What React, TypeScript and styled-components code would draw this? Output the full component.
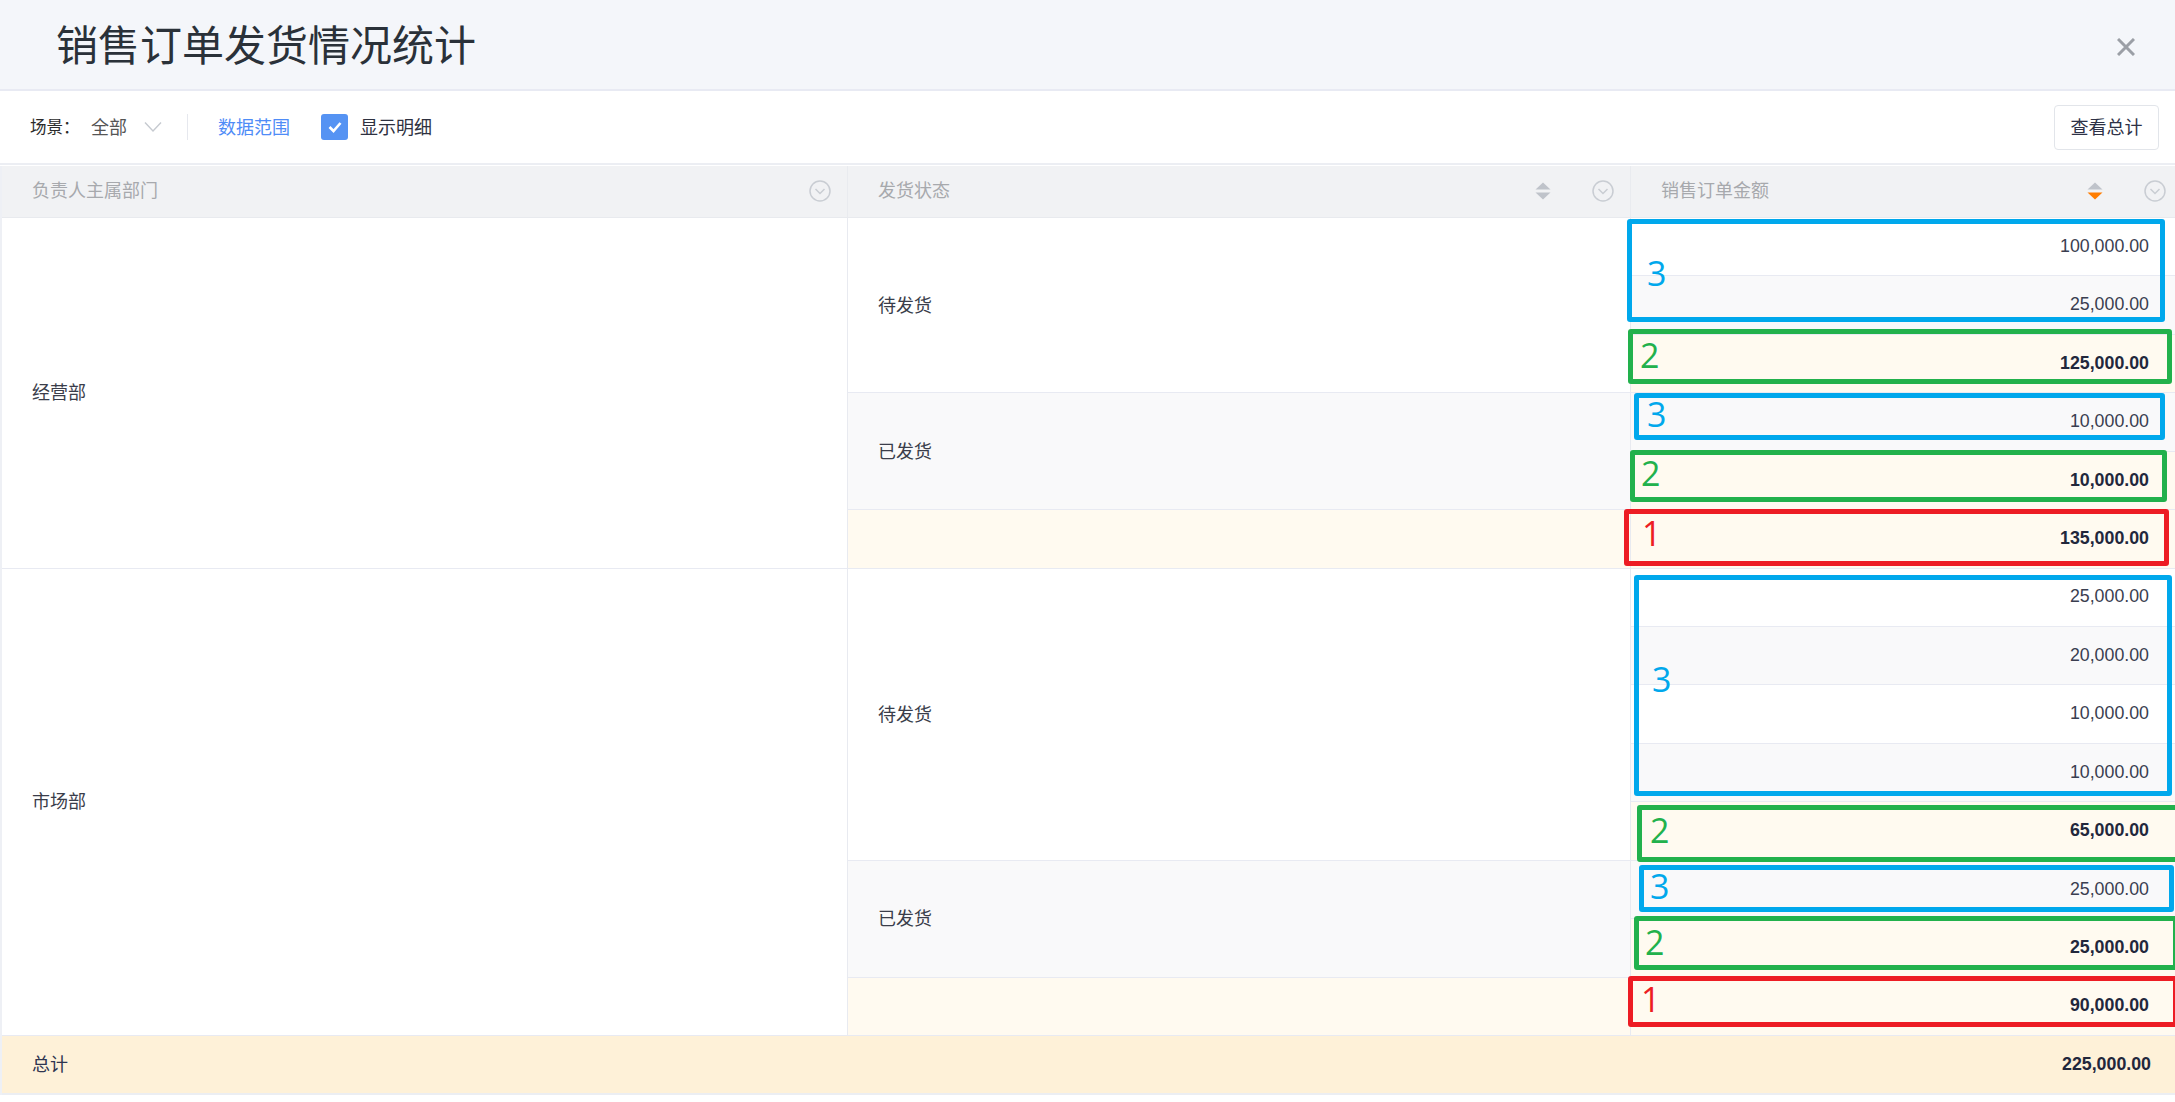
import React from "react";
import styled, { createGlobalStyle } from "styled-components";

const Global = createGlobalStyle`
  html, body { margin: 0; padding: 0; background: #fff; overflow: hidden; }
  * { box-sizing: border-box; }
  body { font-family: "Liberation Sans", "Noto Sans CJK SC", sans-serif; }
`;

const Page = styled.div`
  position: relative;
  width: 2175px;
  height: 1102px;
  overflow: hidden;
  display: flex;
  flex-direction: column;
  font-size: 18px;
  color: #333849;
`;

const TitleBar = styled.header`
  height: 91px;
  flex: none;
  background: #f4f6fa;
  border-bottom: 2px solid #e8eaf3;
  display: flex;
  align-items: center;
  justify-content: space-between;
  padding: 0 40px 3px 56px;
`;

const Title = styled.h1`
  margin: 0;
  font: 400 42px/1 "Noto Sans CJK SC", sans-serif;
  color: #2a3139;
`;

const CloseButton = styled.button`
  border: 0;
  background: none;
  padding: 0;
  width: 18px;
  height: 18px;
  display: block;
  margin-top: 8px;
  svg { display: block; }
`;

const Toolbar = styled.div`
  height: 74px;
  flex: none;
  display: flex;
  align-items: center;
  padding: 0 16px 0 30px;
  border-bottom: 2px solid #eceef3;
`;

const SceneLabel = styled.span`
  font: 400 16.5px/1 "Noto Sans CJK SC", sans-serif;
  color: #2b2b2b;
  width: 61px;
  padding-bottom: 2px;
`;

const SceneValue = styled.span`
  font: 400 18px/1 "Noto Sans CJK SC", sans-serif;
  color: #555;
  width: 53px;
  padding-bottom: 2px;
`;

const Chevron = styled.svg`
  display: block;
  width: 18px;
  height: 10px;
`;

const Divider = styled.span`
  width: 1px;
  height: 26px;
  margin: 0 30px 0 25px;
  background: #e6e8ee;
`;

const LinkText = styled.a`
  font: 400 18px/1 "Noto Sans CJK SC", sans-serif;
  color: #4f8cf7;
  padding-bottom: 2px;
`;

const CheckRow = styled.label`
  display: flex;
  align-items: center;
  gap: 12px;
  margin-left: 31px;
  font: 400 18px/1 "Noto Sans CJK SC", sans-serif;
  color: #2e3140;
`;

const CheckText = styled.span`
  padding-bottom: 2px;
`;

const CheckBox = styled.span`
  width: 27px;
  height: 26px;
  border-radius: 3px;
  background: #5593f3;
  display: flex;
  align-items: center;
  justify-content: center;
`;

const TotalButton = styled.button`
  margin-left: auto;
  width: 105px;
  height: 45px;
  background: #fff;
  border: 1px solid #e2e5ea;
  border-radius: 4px;
  font: 400 18px/1 "Noto Sans CJK SC", sans-serif;
  color: #2e3247;
  padding: 0 0 3px;
`;

const Table = styled.div`
  flex: none;
  margin-top: 1px;
  border-left: 2px solid #eef0f5;
`;

const Columns = styled.div`
  display: grid;
  grid-template-columns: 846px 783px 544px;
`;

const HeadRow = styled(Columns)`
  height: 52px;
  background: #f1f2f4;
  border-bottom: 1px solid #e8eaee;
`;

const HeadCell = styled.div<{ $last?: boolean }>`
  display: flex;
  align-items: center;
  padding: 0 0 2px 30px;
  font: 400 18px/1 "Noto Sans CJK SC", sans-serif;
  color: #a7a9ad;
  border-right: ${(p) => (p.$last ? "0" : "1px solid #e9ebef")};
`;

const HeadLabel = styled.span`
  margin-right: auto;
  padding-bottom: 3px;
`;

const SortIcon = styled.svg<{ $gap: number }>`
  display: block;
  width: 16px;
  height: 18px;
  margin-right: ${(p) => p.$gap}px;
`;

const FilterIcon = styled.svg<{ $right: number }>`
  display: block;
  width: 22px;
  height: 22px;
  margin-right: ${(p) => p.$right}px;
`;

const Body = styled(Columns)`
  height: 818px;
  grid-template-rows: repeat(14, 1fr);
`;

const Cell = styled.div<{ $tone: "white" | "gray" | "sub"; $col: number; $row: number; $span?: number }>`
  grid-column: ${(p) => p.$col};
  grid-row: ${(p) => p.$row} / span ${(p) => p.$span ?? 1};
  background: ${(p) =>
    p.$tone === "white" ? "#fff" : p.$tone === "gray" ? "#f9f9fa" : "#fffaf0"};
  border-bottom: 1px solid #e8eaf2;
  display: flex;
  align-items: center;
`;

const GroupCell = styled(Cell)`
  padding: 0 0 3px 30px;
  border-right: 1px solid #e8eaf0;
  font: 400 18px/1 "Noto Sans CJK SC", sans-serif;
  color: #3a3d4a;
`;

const AmountCell = styled(Cell)<{ $bold?: boolean }>`
  justify-content: flex-end;
  padding-right: 26px;
  font: ${(p) => (p.$bold ? 700 : 400)} 17.8px/1 "Liberation Sans", sans-serif;
  color: ${(p) => (p.$bold ? "#22273c" : "#3a3e50")};
`;

const TotalRow = styled.div`
  height: 59px;
  background: #fef1d8;
  border-bottom: 2px solid #eceef2;
  display: flex;
  align-items: center;
  justify-content: space-between;
  padding: 0 24px 0 30px;
`;

const TotalLabel = styled.span`
  font: 400 18px/1 "Noto Sans CJK SC", sans-serif;
  color: #2f3550;
  padding-bottom: 4px;
`;

const TotalValue = styled.span`
  font: 700 17.8px/1 "Liberation Sans", sans-serif;
  color: #22273c;
`;

const Mark = styled.div<{ $x: number; $y: number; $r: number; $b: number; $c: string }>`
  position: absolute;
  left: ${(p) => p.$x}px;
  top: ${(p) => p.$y}px;
  width: ${(p) => p.$r - p.$x}px;
  height: ${(p) => p.$b - p.$y}px;
  border: 5px solid ${(p) => p.$c};
  border-radius: 3px;
`;

const Digit = styled.span<{ $x: number; $y: number; $c: string }>`
  position: absolute;
  left: ${(p) => p.$x}px;
  top: ${(p) => p.$y}px;
  font: 400 34px/34px "Open Sans", sans-serif;
  color: ${(p) => p.$c};
`;

const BLUE = "#00a8ec";
const GREEN = "#22b14c";
const RED = "#ed1c24";

const marks = [
  { n: 3, c: BLUE, x: 1627, y: 219, r: 2165, b: 322, dx: 1647, dy: 256 },
  { n: 2, c: GREEN, x: 1628, y: 329, r: 2172, b: 384, dx: 1640, dy: 338 },
  { n: 3, c: BLUE, x: 1634, y: 393, r: 2165, b: 440, dx: 1647, dy: 397 },
  { n: 2, c: GREEN, x: 1630, y: 450, r: 2167, b: 502, dx: 1641, dy: 456 },
  { n: 1, c: RED, x: 1624, y: 509, r: 2169, b: 566, dx: 1642, dy: 516 },
  { n: 3, c: BLUE, x: 1634, y: 575, r: 2172, b: 796, dx: 1652, dy: 662 },
  { n: 2, c: GREEN, x: 1637, y: 805, r: 2180, b: 862, dx: 1650, dy: 813 },
  { n: 3, c: BLUE, x: 1639, y: 865, r: 2174, b: 912, dx: 1650, dy: 869 },
  { n: 2, c: GREEN, x: 1634, y: 916, r: 2178, b: 970, dx: 1645, dy: 925 },
  { n: 1, c: RED, x: 1628, y: 976, r: 2178, b: 1027, dx: 1641, dy: 982 },
];

const Sort = ({ active, gap }: { active?: boolean; gap: number }) => (
  <SortIcon $gap={gap} viewBox="0 0 16 18">
    <path d="M8 0.5 L15.5 7.5 H0.5 Z" fill="#bfc3ca" />
    <path d="M0.5 10.5 H15.5 L8 17.5 Z" fill={active ? "#ff7d00" : "#bfc3ca"} />
  </SortIcon>
);

const Filter = ({ right }: { right: number }) => (
  <FilterIcon $right={right} viewBox="0 0 22 22">
    <circle cx="11" cy="11" r="10" fill="none" stroke="#c9cdd3" strokeWidth="1.5" />
    <path d="M6.5 9 L11 13.5 L15.5 9" fill="none" stroke="#c9cdd3" strokeWidth="1.5" />
  </FilterIcon>
);

export default function App() {
  return (
    <Page>
      <Global />
      <TitleBar>
        <Title>销售订单发货情况统计</Title>
        <CloseButton aria-label="关闭">
          <svg width="18" height="18" viewBox="0 0 18 18">
            <path d="M1 1 L17 17 M17 1 L1 17" stroke="#9b9fa6" strokeWidth="3" fill="none" />
          </svg>
        </CloseButton>
      </TitleBar>
      <Toolbar>
        <SceneLabel>场景：</SceneLabel>
        <SceneValue>全部</SceneValue>
        <Chevron viewBox="0 0 18 10">
          <path d="M1 0.5 L9 9 L17 0.5" fill="none" stroke="#c6cad0" strokeWidth="1.4" />
        </Chevron>
        <Divider />
        <LinkText>数据范围</LinkText>
        <CheckRow>
          <CheckBox>
            <svg width="16" height="14" viewBox="0 0 16 14">
              <path d="M2.5 7 L6.5 11 L13.5 3" fill="none" stroke="#fff" strokeWidth="2.6" />
            </svg>
          </CheckBox>
          <CheckText>显示明细</CheckText>
        </CheckRow>
        <TotalButton>查看总计</TotalButton>
      </Toolbar>
      <Table>
        <HeadRow>
          <HeadCell>
            <HeadLabel>负责人主属部门</HeadLabel>
            <Filter right={16} />
          </HeadCell>
          <HeadCell>
            <HeadLabel>发货状态</HeadLabel>
            <Sort gap={41} />
            <Filter right={16} />
          </HeadCell>
          <HeadCell $last>
            <HeadLabel>销售订单金额</HeadLabel>
            <Sort active gap={41} />
            <Filter right={9} />
          </HeadCell>
        </HeadRow>
        <Body>
          <GroupCell $tone="white" $col={1} $row={1} $span={6}>经营部</GroupCell>
          <GroupCell $tone="white" $col={2} $row={1} $span={3}>待发货</GroupCell>
          <AmountCell $tone="white" $col={3} $row={1}>100,000.00</AmountCell>
          <AmountCell $tone="gray" $col={3} $row={2}>25,000.00</AmountCell>
          <AmountCell $tone="sub" $bold $col={3} $row={3}>125,000.00</AmountCell>
          <GroupCell $tone="gray" $col={2} $row={4} $span={2}>已发货</GroupCell>
          <AmountCell $tone="gray" $col={3} $row={4}>10,000.00</AmountCell>
          <AmountCell $tone="sub" $bold $col={3} $row={5}>10,000.00</AmountCell>
          <GroupCell $tone="sub" $col={2} $row={6} />
          <AmountCell $tone="sub" $bold $col={3} $row={6}>135,000.00</AmountCell>

          <GroupCell $tone="white" $col={1} $row={7} $span={8}>市场部</GroupCell>
          <GroupCell $tone="white" $col={2} $row={7} $span={5}>待发货</GroupCell>
          <AmountCell $tone="white" $col={3} $row={7}>25,000.00</AmountCell>
          <AmountCell $tone="gray" $col={3} $row={8}>20,000.00</AmountCell>
          <AmountCell $tone="white" $col={3} $row={9}>10,000.00</AmountCell>
          <AmountCell $tone="gray" $col={3} $row={10}>10,000.00</AmountCell>
          <AmountCell $tone="sub" $bold $col={3} $row={11}>65,000.00</AmountCell>
          <GroupCell $tone="gray" $col={2} $row={12} $span={2}>已发货</GroupCell>
          <AmountCell $tone="gray" $col={3} $row={12}>25,000.00</AmountCell>
          <AmountCell $tone="sub" $bold $col={3} $row={13}>25,000.00</AmountCell>
          <GroupCell $tone="sub" $col={2} $row={14} />
          <AmountCell $tone="sub" $bold $col={3} $row={14}>90,000.00</AmountCell>
        </Body>
        <TotalRow>
          <TotalLabel>总计</TotalLabel>
          <TotalValue>225,000.00</TotalValue>
        </TotalRow>
      </Table>
      {marks.map((m) => (
        <React.Fragment key={`${m.x}-${m.y}`}>
          <Mark $x={m.x} $y={m.y} $r={m.r} $b={m.b} $c={m.c} />
          <Digit $x={m.dx} $y={m.dy} $c={m.c}>{m.n}</Digit>
        </React.Fragment>
      ))}
    </Page>
  );
}
